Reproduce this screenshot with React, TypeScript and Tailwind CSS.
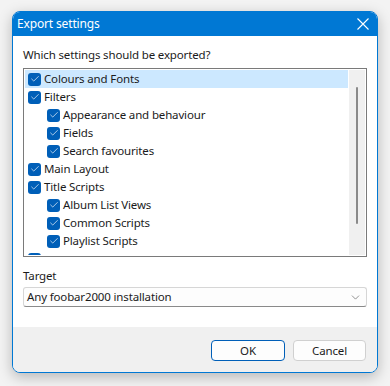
import { ChevronDown, Check } from 'lucide-react';

type Item = { label: string; level: number; selected?: boolean };

const items: Item[] = [
  { label: 'Colours and Fonts', level: 0, selected: true },
  { label: 'Filters', level: 0 },
  { label: 'Appearance and behaviour', level: 1 },
  { label: 'Fields', level: 1 },
  { label: 'Search favourites', level: 1 },
  { label: 'Main Layout', level: 0 },
  { label: 'Title Scripts', level: 0 },
  { label: 'Album List Views', level: 1 },
  { label: 'Common Scripts', level: 1 },
  { label: 'Playlist Scripts', level: 1 },
  // last row is scrolled mostly out of view, only the box peeks in
  { label: '', level: 0 },
];

function CheckBox() {
  return (
    <span className="flex h-[13px] w-[13px] shrink-0 items-center justify-center rounded-[3px] bg-[#005fb8]">
      <Check size={10} strokeWidth={1.6} className="text-white" />
    </span>
  );
}

export default function App() {
  return (
    <div className="h-[386px] w-[390px] overflow-hidden bg-[#f3f3f3] pl-[12px] pt-[11px] font-['Noto_Sans',sans-serif] text-[11.5px] tracking-[-0.15px] text-[#1b1b1b]">
      <div className="flex h-[362px] w-[366px] flex-col overflow-hidden rounded-[8px] border border-[#0078d4] bg-white shadow-[0_4px_14px_rgba(0,0,0,0.25)]">
        {/* title bar */}
        <div className="flex h-[24px] shrink-0 items-center justify-between bg-[#0078d4] pl-[4px] pr-[8px] text-white">
          <span className="text-[12px]">Export settings</span>
          <svg width="12" height="12" viewBox="0 0 12 12" fill="none" stroke="white" strokeWidth="1.1">
            <path d="M0.5 0.5L11.5 11.5M11.5 0.5L0.5 11.5" />
          </svg>
        </div>

        <div className="flex flex-1 flex-col px-[10px] pt-[11px]">
          <div className="h-[16px] leading-[16px]">Which settings should be exported?</div>

          <div className="mt-[5px] flex h-[189px] border border-[#7a7a7a] p-[1px]">
            <div className="flex-1 overflow-hidden">
              {items.map((it, i) => (
                <div
                  key={i}
                  className={`flex h-[18px] shrink-0 items-center gap-[3px] ${it.level ? 'pl-[22px]' : 'pl-[3px]'} ${it.selected ? 'bg-[#cce8ff]' : ''}`}
                >
                  <CheckBox />
                  {it.label && <span className="leading-[16px]">{it.label}</span>}
                </div>
              ))}
            </div>
            <div className="ml-[1px] flex w-[16px] justify-center bg-[#f0f0f0] pt-[17px]">
              <div className="h-[137px] w-[2px] rounded-full bg-[#8a8a8a]" />
            </div>
          </div>

          <div className="mt-[11px] h-[16px] leading-[16px]">Target</div>
          <div className="mt-[3px] flex h-[20px] items-center justify-between rounded-[3px] border border-[#d6d6d6] border-b-[#8a8a8a] bg-[#fdfdfd] pl-[3px] pr-[4px]">
            <span>Any foobar2000 installation</span>
            <ChevronDown size={13} strokeWidth={1.1} className="text-[#4a4a4a]" />
          </div>
        </div>

        {/* footer */}
        <div className="flex h-[45px] shrink-0 items-start justify-end gap-[8px] bg-[#f0f0f0] pr-[11px] pt-[13px]">
          <button className="h-[21px] w-[74px] rounded-[4px] border border-[#005fb8] bg-[#fdfdfd] leading-none">OK</button>
          <button className="h-[21px] w-[73px] rounded-[4px] border border-[#d0d0d0] bg-[#fdfdfd] leading-none">Cancel</button>
        </div>
      </div>
    </div>
  );
}
